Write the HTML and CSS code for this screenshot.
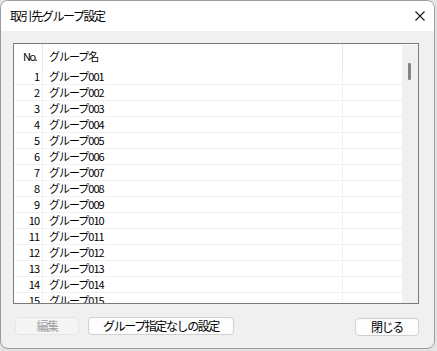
FILE: index.html
```html
<!DOCTYPE html>
<html lang="ja">
<head>
    <meta charset="UTF-8">
    <title>取引先グループ設定</title>
    <link rel="stylesheet" href="styles.css">
</head>
<body>
    <div class="window">
        <div class="titlebar">
            <span class="title">取引先グループ設定</span>
            <svg class="close" width="10" height="10" viewBox="0 0 10 10">
                <path d="M0.5 0.5 L9.5 9.5 M9.5 0.5 L0.5 9.5" stroke="#1a1a1a" stroke-width="1.1" fill="none"/>
            </svg>
        </div>
        <div class="content">
            <div class="listbox">
                <div class="table">
                    <div class="row head">
                        <div class="cell no">No.</div>
                        <div class="cell name">グループ名</div>
                        <div class="cell extra"></div>
                    </div>
                    <div class="row"><div class="cell no">1</div><div class="cell name">グループ001</div><div class="cell extra"></div></div>
                    <div class="row"><div class="cell no">2</div><div class="cell name">グループ002</div><div class="cell extra"></div></div>
                    <div class="row"><div class="cell no">3</div><div class="cell name">グループ003</div><div class="cell extra"></div></div>
                    <div class="row"><div class="cell no">4</div><div class="cell name">グループ004</div><div class="cell extra"></div></div>
                    <div class="row"><div class="cell no">5</div><div class="cell name">グループ005</div><div class="cell extra"></div></div>
                    <div class="row"><div class="cell no">6</div><div class="cell name">グループ006</div><div class="cell extra"></div></div>
                    <div class="row"><div class="cell no">7</div><div class="cell name">グループ007</div><div class="cell extra"></div></div>
                    <div class="row"><div class="cell no">8</div><div class="cell name">グループ008</div><div class="cell extra"></div></div>
                    <div class="row"><div class="cell no">9</div><div class="cell name">グループ009</div><div class="cell extra"></div></div>
                    <div class="row"><div class="cell no">10</div><div class="cell name">グループ010</div><div class="cell extra"></div></div>
                    <div class="row"><div class="cell no">11</div><div class="cell name">グループ011</div><div class="cell extra"></div></div>
                    <div class="row"><div class="cell no">12</div><div class="cell name">グループ012</div><div class="cell extra"></div></div>
                    <div class="row"><div class="cell no">13</div><div class="cell name">グループ013</div><div class="cell extra"></div></div>
                    <div class="row"><div class="cell no">14</div><div class="cell name">グループ014</div><div class="cell extra"></div></div>
                    <div class="row"><div class="cell no">15</div><div class="cell name">グループ015</div><div class="cell extra"></div></div>
                </div>
                <div class="scrollbar">
                    <div class="thumb"></div>
                </div>
            </div>
            <div class="buttons">
                <button class="btn edit" disabled>編集</button>
                <button class="btn wide">グループ指定なしの設定</button>
                <button class="btn close-btn">閉じる</button>
            </div>
        </div>
    </div>
</body>
</html>
```

FILE: styles.css
```css
html {
    background-color: #e3e3e3;
}
body {
    margin: 0;
    font-family: "Noto Sans CJK JP", sans-serif;
    color: #000;
}
.window {
    width: 433px;
    height: 347px;
    border: 1px solid #9c9c9c;
    border-radius: 8px;
    background-color: #f0f0f0;
    overflow: hidden;
    display: flex;
    flex-direction: column;
}
.titlebar {
    height: 30px;
    background-color: #fff;
    display: flex;
    align-items: center;
    justify-content: space-between;
    padding: 0 9px 0 9px;
}
.title {
    font-size: 12px;
    letter-spacing: -1.4px;
    margin-top: -1px;
}
.close {
    margin-right: 0px;
}
.content {
    padding: 12px 15px 0 12px;
}
.listbox {
    height: 259px;
    border: 1px solid #7a7a7a;
    background-color: #fff;
    display: flex;
    overflow: hidden;
}
.table {
    width: 389px;
    overflow: hidden;
}
.row {
    display: grid;
    grid-template-columns: 29px 300px 60px;
    height: 16px;
    border-bottom: 1px solid #f0f0f0;
    box-sizing: border-box;
    font-size: 11px;
    letter-spacing: -1px;
    line-height: 15px;
}
.row.head {
    height: 25px;
    border-bottom: none;
    line-height: 25px;
}
.cell {
    border-right: 1px solid #f0f0f0;
    white-space: nowrap;
    overflow: hidden;
}
.cell.no {
    text-align: right;
    padding-right: 3px;
}
.head .cell.no {
    text-align: left;
    padding-left: 9px;
    letter-spacing: -1.5px;
}
.head .cell {
    border-right-color: #e6e6e6;
}
.cell.name {
    padding-left: 6px;
}
.cell.extra {
    border-right: none;
}
.scrollbar {
    width: 16px;
    margin-top: 1px;
    background-color: #f0f0f0;
}
.thumb {
    width: 3px;
    height: 17px;
    margin: 18px 0 0 6px;
    background-color: #858585;
    border-radius: 1px;
}
.buttons {
    display: flex;
    align-items: flex-start;
    gap: 9px;
    margin-top: 13px;
    padding-left: 2px;
}
.btn {
    height: 18px;
    padding: 0;
    border: 1px solid #d0d0d0;
    border-radius: 4px;
    background-color: #fdfdfd;
    font-family: "Noto Sans CJK JP", sans-serif;
    font-size: 12px;
    letter-spacing: -1.4px;
    line-height: 16px;
    color: #000;
}
.btn.edit {
    width: 64px;
    background-color: #f5f5f5;
    border-color: #e5e5e5;
    color: #a0a0a0;
}
.btn.wide {
    width: 146px;
}
.btn.close-btn {
    width: 64px;
    margin-left: auto;
    margin-top: 1px;
}
```
